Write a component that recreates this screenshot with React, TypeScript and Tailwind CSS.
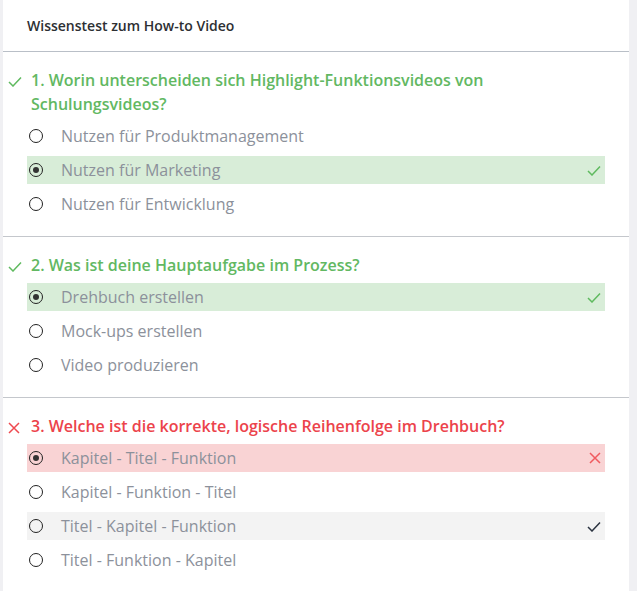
// Quiz result card: "Wissenstest zum How-to Video"
type Mark = 'correct' | 'wrong' | 'solution' | undefined;

interface Option {
  label: string;
  selected?: boolean;
  mark?: Mark;
}

interface Question {
  title: string;
  ok: boolean;
  options: Option[];
}

const questions: Question[] = [
  {
    title: '1. Worin unterscheiden sich Highlight-Funktionsvideos von Schulungsvideos?',
    ok: true,
    options: [
      { label: 'Nutzen für Produktmanagement' },
      { label: 'Nutzen für Marketing', selected: true, mark: 'correct' },
      { label: 'Nutzen für Entwicklung' },
    ],
  },
  {
    title: '2. Was ist deine Hauptaufgabe im Prozess?',
    ok: true,
    options: [
      { label: 'Drehbuch erstellen', selected: true, mark: 'correct' },
      { label: 'Mock-ups erstellen' },
      { label: 'Video produzieren' },
    ],
  },
  {
    title: '3. Welche ist die korrekte, logische Reihenfolge im Drehbuch?',
    ok: false,
    options: [
      { label: 'Kapitel - Titel - Funktion', selected: true, mark: 'wrong' },
      { label: 'Kapitel - Funktion - Titel' },
      { label: 'Titel - Kapitel - Funktion', mark: 'solution' },
      { label: 'Titel - Funktion - Kapitel' },
    ],
  },
];

function Check({ color }: { color: string }) {
  return (
    <svg width="14" height="11" viewBox="0 0 14 11" fill="none" stroke={color} strokeWidth="1.5">
      <path d="M1 6 L5 10 L13 1.5" />
    </svg>
  );
}

function Cross({ color }: { color: string }) {
  return (
    <svg width="12" height="12" viewBox="0 0 12 12" fill="none" stroke={color} strokeWidth="1.5">
      <path d="M1 1 L11 11 M11 1 L1 11" />
    </svg>
  );
}

function Radio({ checked }: { checked?: boolean }) {
  return (
    <span className="flex h-[14px] w-[14px] items-center justify-center rounded-full border-[1.5px] border-[#222]">
      {checked && <span className="h-[6px] w-[6px] rounded-full bg-[#333]" />}
    </span>
  );
}

function OptionRow({ option }: { option: Option }) {
  const bg =
    option.mark === 'correct'
      ? 'bg-[#d8edd8]'
      : option.mark === 'wrong'
        ? 'bg-[#f9d3d4]'
        : option.mark === 'solution'
          ? 'bg-[#f3f3f3]'
          : '';
  return (
    <div className={`flex h-[28px] items-center pl-[2px] pr-[4px] ${bg}`}>
      <Radio checked={option.selected} />
      <span className="ml-[18px] flex-1 text-[16px] text-[#8c919b]">{option.label}</span>
      {option.mark === 'correct' && <Check color="#5fba5f" />}
      {option.mark === 'wrong' && <Cross color="#f05a5f" />}
      {option.mark === 'solution' && <Check color="#2b3340" />}
    </div>
  );
}

function QuestionBlock({ q, last }: { q: Question; last: boolean }) {
  return (
    <section className={`pb-[18px] pl-[5px] pr-[24px] pt-[16px] ${last ? '' : 'border-b border-[#c4c7cc]'}`}>
      <div className="flex items-start">
        <span className="mt-[8px] w-[20px] shrink-0">
          {q.ok ? <Check color="#5fba5f" /> : <Cross color="#ef4a50" />}
        </span>
        <h2
          className={`pl-[3px] text-[16px] font-semibold leading-[24px] ${q.ok ? 'text-[#62b862]' : 'text-[#ec434b]'}`}
        >
          {q.title}
        </h2>
      </div>
      <div className="ml-[19px] mt-[6px] flex flex-col gap-[6px]">
        {q.options.map((o) => (
          <OptionRow key={o.label} option={o} />
        ))}
      </div>
    </section>
  );
}

export default function App() {
  return (
    <div
      className="min-h-[591px] w-[637px] bg-[#f0f0f3] pl-[3px] pr-[8px]"
      style={{ fontFamily: '"Open Sans", "Noto Sans", sans-serif' }}
    >
      <div className="min-h-[591px] bg-white">
        <header className="flex h-[52px] items-center border-b border-[#b9bfc7] pl-[24px]">
          <h1 className="text-[14px] font-semibold text-[#2d2f33]">Wissenstest zum How-to Video</h1>
        </header>
        {questions.map((q, i) => (
          <QuestionBlock key={q.title} q={q} last={i === questions.length - 1} />
        ))}
      </div>
    </div>
  );
}
